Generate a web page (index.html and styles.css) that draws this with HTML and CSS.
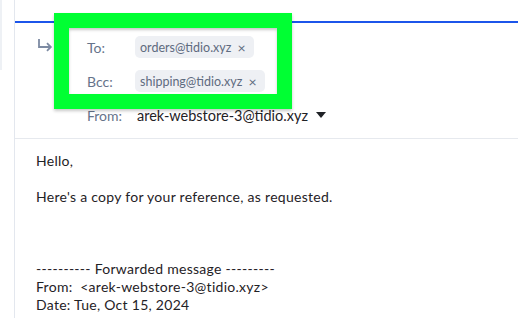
FILE: index.html
```html
<!DOCTYPE html>
<html lang="en">
<head>
    <meta charset="UTF-8">
    <meta name="viewport" content="width=device-width, initial-scale=1.0">
    <title>Forward message</title>
    <link rel="stylesheet" href="styles.css">
</head>
<body>
    <div class="page">
        <div class="side">
            <div class="side-edge"></div>
        </div>

        <div class="composer">
            <div class="top-bar"></div>

            <div class="header">
                <div class="reply-icon">
                    <svg width="16" height="14" viewBox="0 0 16 14">
                        <path d="M2 1 V9 H13.5" fill="none" stroke="#7d8ba3" stroke-width="1.8"/>
                        <path d="M10 5.2 L13.8 9 L10 12.8" fill="none" stroke="#7d8ba3" stroke-width="1.8"/>
                    </svg>
                    <span class="mini-caret"></span>
                </div>

                <div class="rows">
                    <div class="row">
                        <span class="label">To:</span>
                        <span class="chip">orders@tidio.xyz <span class="x">&times;</span></span>
                    </div>
                    <div class="row">
                        <span class="label">Bcc:</span>
                        <span class="chip">shipping@tidio.xyz <span class="x">&times;</span></span>
                    </div>
                    <div class="row">
                        <span class="label">From:</span>
                        <span class="sender">arek-webstore-3@tidio.xyz</span>
                        <span class="caret"></span>
                    </div>
                </div>

                <!-- highlight over the recipients -->
                <div class="highlight"></div>
            </div>

            <div class="message">
                <p>Hello,</p>
                <p>&nbsp;</p>
                <p>Here's a copy for your reference, as requested.</p>
                <p>&nbsp;</p>
                <p>&nbsp;</p>
                <p>&nbsp;</p>
                <p>---------- Forwarded message ---------</p>
                <p>From:&nbsp; &lt;arek-webstore-3@tidio.xyz&gt;</p>
                <p>Date: Tue, Oct 15, 2024</p>
                <p>Subject: Looking for my order confirmation</p>
            </div>
        </div>
    </div>
</body>
</html>
```

FILE: styles.css
```css
body {
    margin: 0;
    font-family: "Lato", "Noto Sans", sans-serif;
    background-color: #fff;
    color: #1f2226;
    overflow: hidden;
}

.page {
    display: flex;
    height: 318px;
}

.side {
    width: 14px;
    border-right: 1px solid #e3e7ee;
    flex-shrink: 0;
}
.side-edge {
    width: 2px;
    height: 70px;
    background-color: #eef1f5;
}

.composer {
    flex: 1;
    padding-top: 21px;
}

.top-bar {
    height: 2px;
    background-color: #1c55ea;
}

.header {
    position: relative;
    display: flex;
    padding: 7px 0 6px 22px;
    border-bottom: 1px solid #e6e9ee;
}

.reply-icon {
    display: flex;
    align-items: flex-start;
    gap: 9px;
    width: 50px;
    padding-top: 8px;
}
.mini-caret {
    margin-top: 7px;
    border-left: 3px solid transparent;
    border-right: 3px solid transparent;
    border-top: 4px solid #8a96aa;
}

.rows {
    display: flex;
    flex-direction: column;
}

.row {
    display: flex;
    align-items: center;
    height: 34px;
}

.label {
    width: 48px;
    font-size: 14px;
    color: #66738a;
}

.chip {
    display: flex;
    align-items: center;
    height: 22px;
    padding: 0 8px 0 5px;
    border-radius: 5px;
    background-color: #eef0f4;
    color: #5e6b80;
    font-size: 12.5px;
}
.chip .x {
    margin-left: 6px;
    font-size: 14px;
    color: #5e6b80;
}

.sender {
    margin-left: 2px;
    font-size: 14.5px;
    color: #1f2226;
}
.caret {
    margin-left: 8px;
    border-left: 5px solid transparent;
    border-right: 5px solid transparent;
    border-top: 6px solid #1f2226;
}

.highlight {
    position: absolute;
    left: 39px;
    top: -10px;
    width: 208px;
    height: 66px;
    border: 15px solid #00ff33;
    box-shadow: 0 2px 3px rgba(0, 0, 0, 0.22), inset 0 2px 3px rgba(0, 0, 0, 0.22);
}

.message {
    padding: 13px 0 0 21px;
    font-size: 14px;
    line-height: 18px;
    letter-spacing: 0.28px;
}
.message p {
    margin: 0;
    white-space: nowrap;
}
```
